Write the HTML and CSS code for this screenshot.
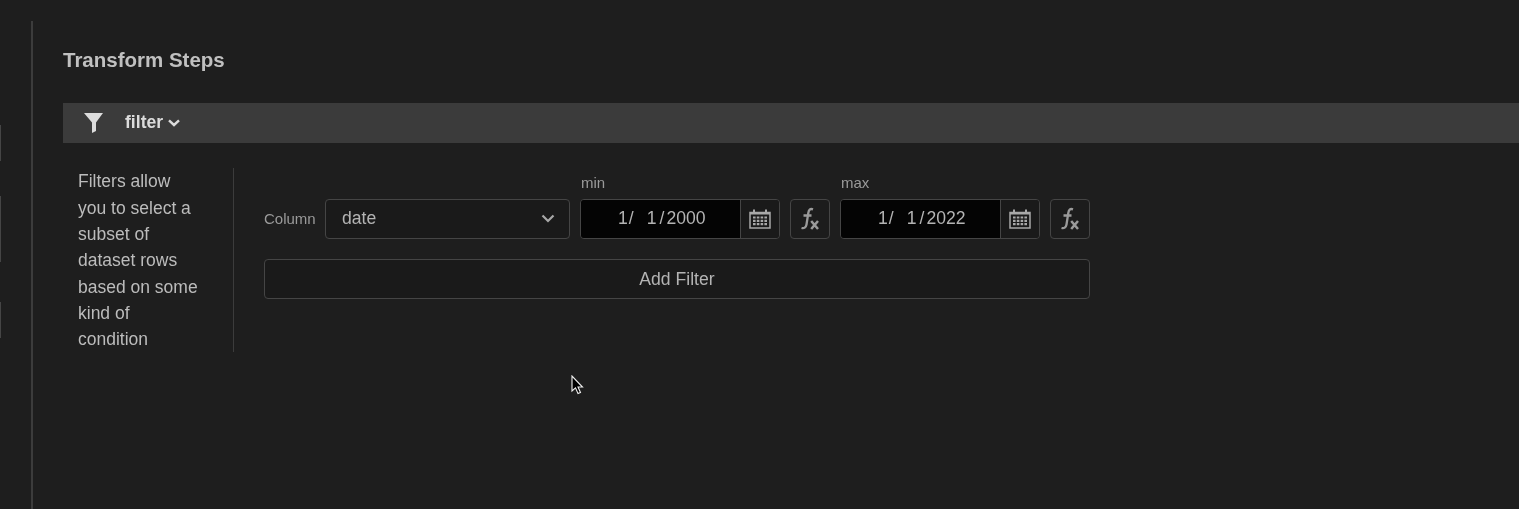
FILE: index.html
```html
<!DOCTYPE html>
<html lang="en">
<head>
<meta charset="utf-8">
<title>Transform Steps</title>
<link rel="stylesheet" href="styles.css">
</head>
<body>
<div class="page">
  <aside class="rail">
    <span class="mark mark-a"></span>
    <span class="mark mark-b"></span>
    <span class="mark mark-a"></span>
  </aside>
  <main class="panel">
    <h1 class="title">Transform Steps</h1>
    <div class="step-bar">
      <svg class="funnel" width="19" height="20" viewBox="0 0 19 20"><path d="M0 0H19L12 9.500V18L8 20V9.500Z" fill="#dcdcdc"/></svg>
      <span class="step-name">filter</span>
      <svg class="step-chev" width="12" height="8" viewBox="0 0 12 8"><path d="M1 1.400 6 6l5-4.600" fill="none" stroke="#dcdcdc" stroke-width="2.400"/></svg>
    </div>
    <div class="step-body">
      <p class="desc">Filters allow you to select a subset of dataset rows based on some kind of condition</p>
      <div class="form">
        <div class="row">
          <div class="col-group">
            <span class="col-label">Column</span>
            <div class="select">
              <span>date</span>
              <svg width="14" height="9" viewBox="0 0 14 9"><path d="M1.500 1.500 7 7l5.500-5.500" fill="none" stroke="#a8a8a8" stroke-width="2.200"/></svg>
            </div>
          </div>
          <div class="field">
            <label class="field-label">min</label>
            <div class="field-row">
              <div class="date">
                <div class="date-value"><span class="d1">1</span><span>/</span><span class="d2">1</span><span class="d3">/</span><span>2000</span></div>
                <div class="date-btn">
                  <svg width="22" height="20" viewBox="0 0 22 20"><use href="#cal"/></svg>
                </div>
              </div>
              <div class="fx"><svg width="20" height="24" viewBox="0 0 20 24"><use href="#fx"/></svg></div>
            </div>
          </div>
          <div class="field">
            <label class="field-label">max</label>
            <div class="field-row">
              <div class="date">
                <div class="date-value"><span class="d1">1</span><span>/</span><span class="d2">1</span><span class="d3">/</span><span>2022</span></div>
                <div class="date-btn">
                  <svg width="22" height="20" viewBox="0 0 22 20"><use href="#cal"/></svg>
                </div>
              </div>
              <div class="fx"><svg width="20" height="24" viewBox="0 0 20 24"><use href="#fx"/></svg></div>
            </div>
          </div>
        </div>
        <button class="add">Add Filter</button>
      </div>
    </div>
  </main>
</div>
<svg class="cursor" width="13" height="20" viewBox="0 0 13 20"><path d="M1 1V16L4.500 12.800 7 18.500 9.500 17.400 7 12H11.500Z" fill="#000" stroke="#eee" stroke-width="1.100"/></svg>
<svg class="defs" width="0" height="0">
  <symbol id="cal" viewBox="0 0 22 20">
    <path d="M1 3.500H21V19H1Z" fill="none" stroke="#a8a8a8" stroke-width="1.500"/>
    <path d="M1 3H21V5.500H1Z" fill="#a8a8a8"/>
    <path d="M5 0.500V4M17 0.500V4" stroke="#a8a8a8" stroke-width="2"/>
    <path d="M4 8.500H18.200M4 11.800H18.200M4 15.100H18.200" stroke="#a8a8a8" stroke-width="2.200" stroke-dasharray="2.600 1.200"/>
  </symbol>
  <symbol id="fx" viewBox="0 0 20 24">
    <path d="M13 2.300C10 1.200 8.800 3 8.300 6L6.500 17.500C6 20.500 4 21.700 1.500 21M3.500 8.500H11.500" fill="none" stroke="#9a9a9a" stroke-width="2.300"/>
    <path d="M11.200 14 18 22M18 14 11.200 22" fill="none" stroke="#9a9a9a" stroke-width="2.500"/>
  </symbol>
</svg>
</body>
</html>
```
FILE: styles.css
```css
* { box-sizing: border-box; }
html, body { margin: 0; height: 100%; overflow: hidden; }
body {
  background: #1e1e1e;
  color: #c0c0c0;
  font-family: "Liberation Sans", Arial, sans-serif;
}
.page { display: flex; height: 509px; will-change: transform; }
.rail {
  width: 31px;
  flex: none;
  padding-top: 125px;
  display: flex;
  flex-direction: column;
  align-items: flex-start;
  gap: 35px;
}
.mark { display: block; width: 1px; background: #454545; }
.mark-a { height: 36px; }
.mark-b { height: 66px; margin-bottom: 5px; }
.panel {
  flex: 1;
  min-width: 0;
  margin-top: 21px;
  border-left: 2px solid #3c3c3c;
  padding: 25px 0 0 30px;
}
.title {
  margin: 0;
  font-size: 20.500px;
  line-height: 28px;
  font-weight: 700;
  color: #c0c0c0;
}
.step-bar {
  margin-top: 29px;
  height: 40px;
  background: #3b3b3b;
  display: flex;
  align-items: center;
  padding-left: 21px;
}
.funnel { margin: 0 22px 1px 0; }
.step-name { font-size: 17.600px; line-height: 20px; padding-bottom: 2px; font-weight: 700; color: #dcdcdc; margin-right: 5px; }
.step-body { display: flex; margin-top: 25px; }
.desc {
  width: 171px;
  height: 184px;
  margin: 0;
  padding: 0.400px 33px 0 15px;
  border-right: 1px solid #3c3c3c;
  font-size: 17.500px;
  line-height: 26.300px;
  color: #bcbcbc;
}
.form { width: 826px; margin-left: 30px; padding-top: 6px; display: flex; flex-direction: column; gap: 20px; }
.row { display: flex; align-items: flex-end; gap: 10px; }
.col-group { display: flex; align-items: center; gap: 10px; }
.col-label { width: 51px; flex: none; font-size: 15px; line-height: 17px; padding-bottom: 2px; color: #9a9a9a; white-space: nowrap; }
.select {
  width: 245px;
  height: 40px;
  border: 1px solid #454545;
  border-radius: 4px;
  background: #1a1a1a;
  display: flex;
  align-items: center;
  justify-content: space-between;
  padding: 0 14px 1px 16px;
  font-size: 17.600px;
  color: #b4b4b4;
}
.field { display: flex; flex-direction: column; }
.field-label { font-size: 15px; line-height: 17px; padding-left: 1px; color: #9a9a9a; margin-bottom: 8px; }
.field-row { display: flex; gap: 10px; }
.date {
  width: 200px;
  height: 40px;
  border: 1px solid #454545;
  border-radius: 4px;
  display: flex;
  overflow: hidden;
}
.date-value {
  width: 160px;
  background: #040404;
  border-right: 1px solid #454545;
  display: flex;
  align-items: center;
  padding: 0 0 1px 37px;
  font-size: 17.600px;
  color: #b4b4b4;
}
.d1 { margin-right: 1px; }
.d2 { margin-left: 13px; }
.d3 { margin: 0 2px 0 3px; }
.date-btn {
  flex: 1;
  background: #1a1a1a;
  display: flex;
  align-items: center;
  justify-content: center;
}
.fx {
  width: 40px;
  height: 40px;
  border: 1px solid #454545;
  border-radius: 4px;
  background: #1c1c1c;
  display: flex;
  align-items: center;
  justify-content: center;
}
.add {
  width: 100%;
  height: 40px;
  border: 1px solid #454545;
  border-radius: 4px;
  background: #1a1a1a;
  color: #b4b4b4;
  font-family: inherit;
  font-size: 17.600px;
}
.cursor { position: absolute; left: 571px; top: 375px; }
.defs { position: absolute; }
```
